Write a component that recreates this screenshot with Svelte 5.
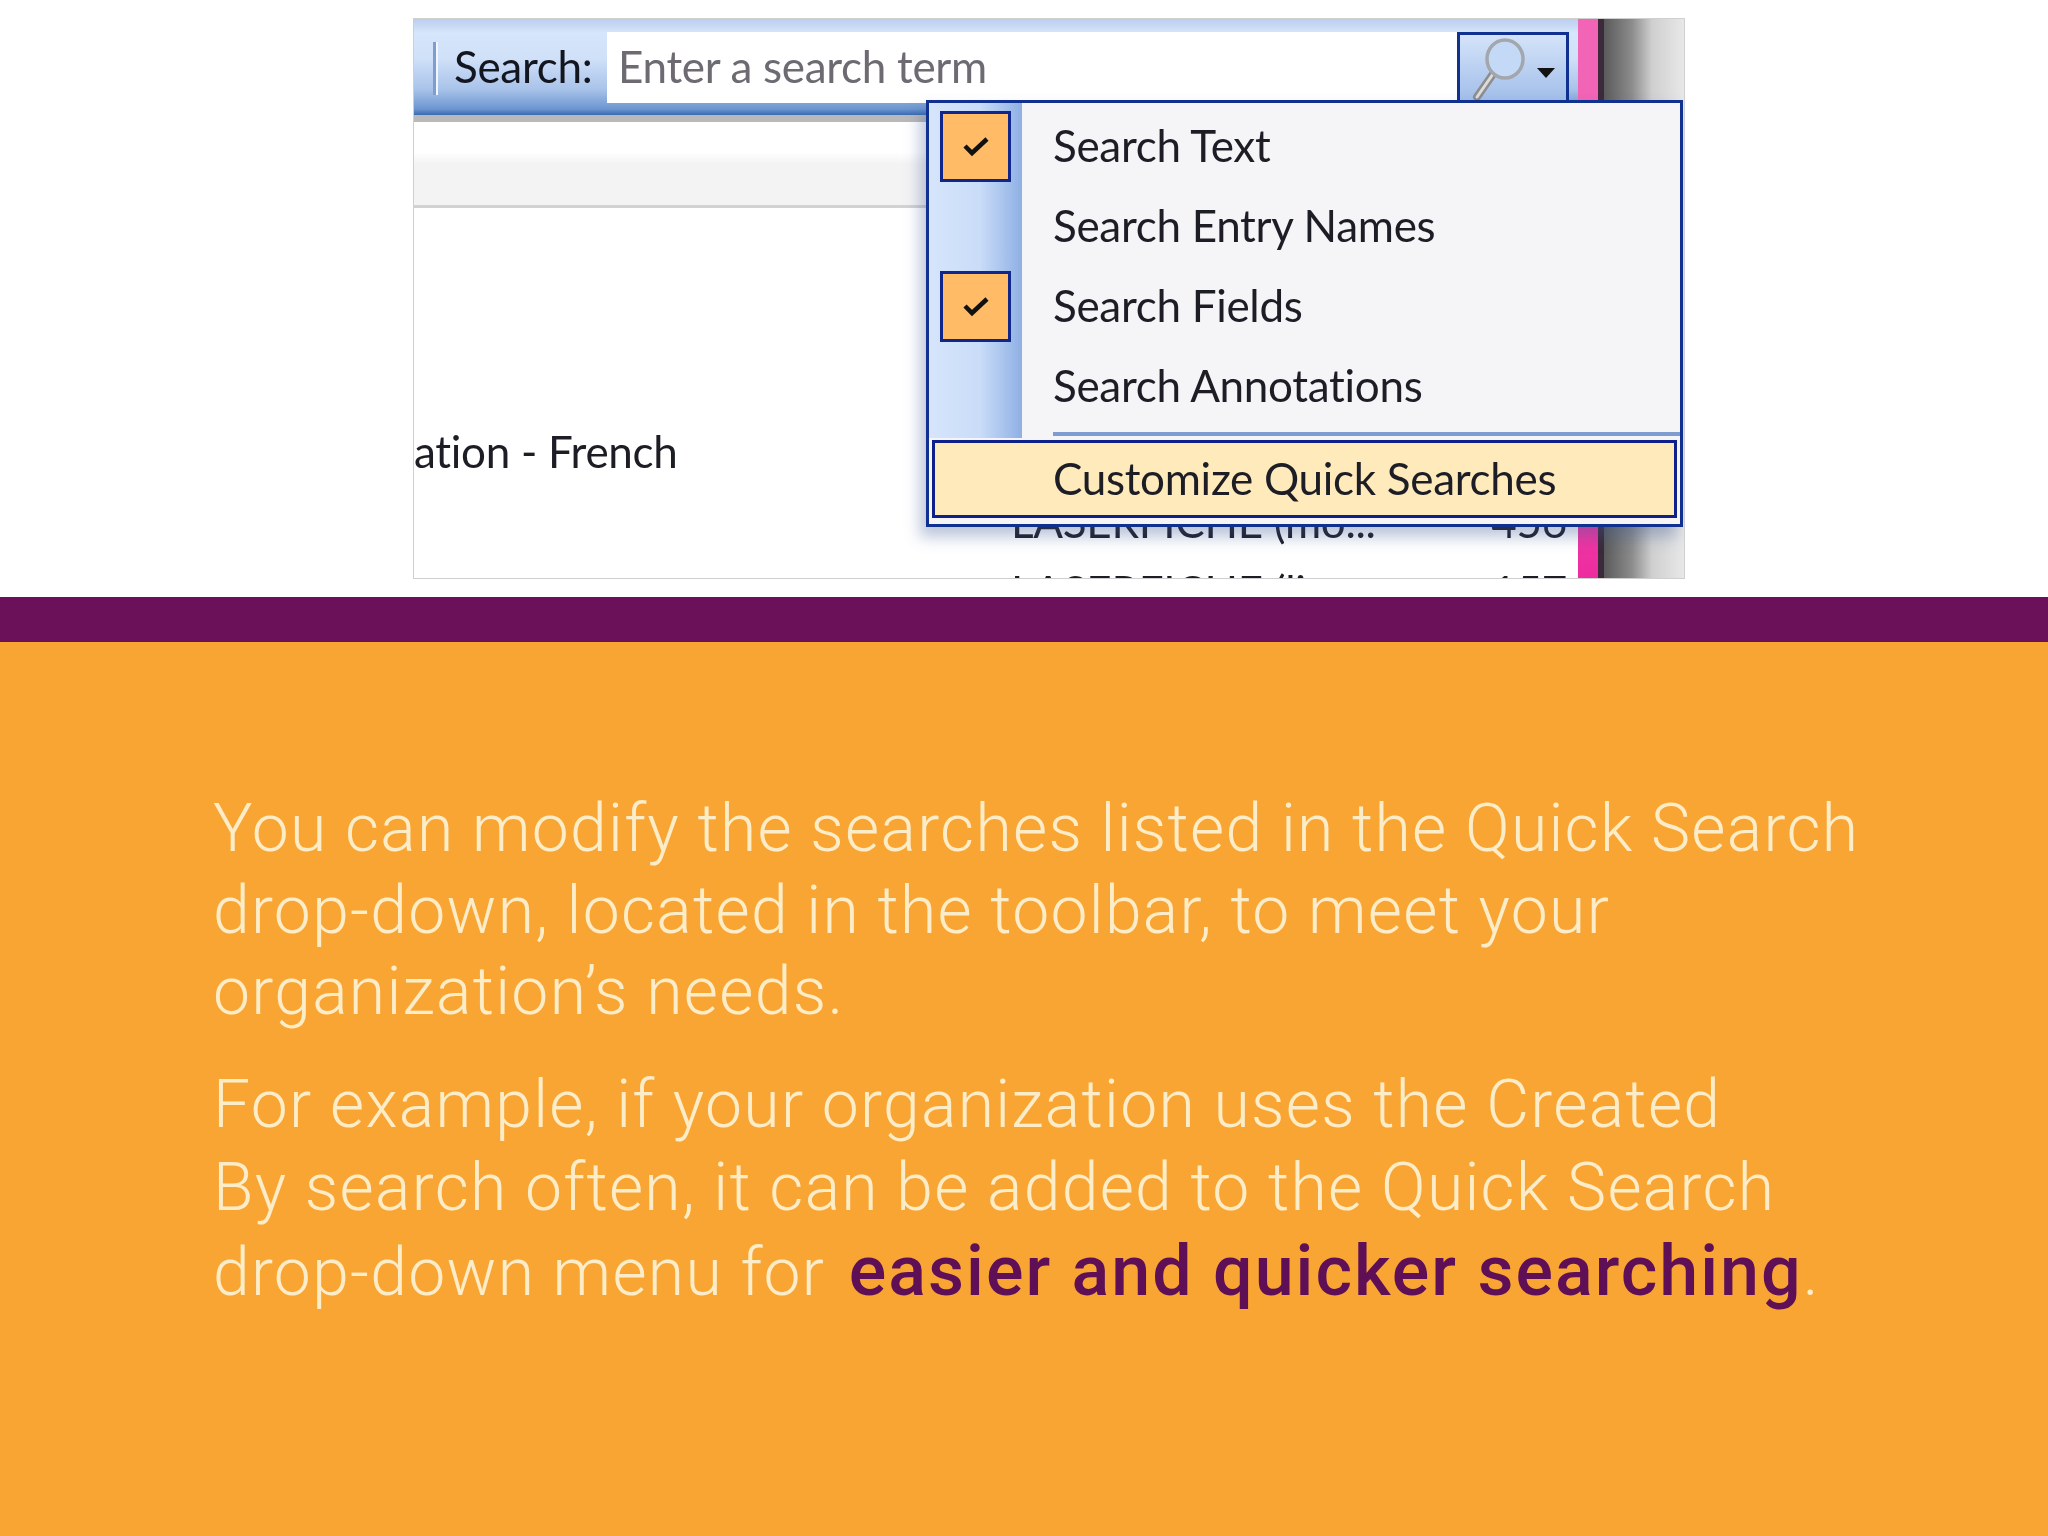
<script>
const menuItems = [
    { label: 'Search Text', checked: true },
    { label: 'Search Entry Names', checked: false },
    { label: 'Search Fields', checked: true },
    { label: 'Search Annotations', checked: false }
];

const rows = [
    { name: 'ation - French', count: '', indent: false },
    { name: 'LASERFICHE (mo...', count: '456', indent: true },
    { name: 'LASERFICHE (li...', count: '157', indent: true }
];
</script>

<div class="page">
    <div class="top">
        <div class="shot">
            <div class="main">
                <div class="toolbar">
                    <span class="sep"></span>
                    <span class="label">Search:</span>
                    <span class="input">Enter a search term</span>
                    <span class="button">
                        <svg class="glass" width="56" height="66" viewBox="0 0 56 66">
                            <line x1="7" y1="60" x2="23" y2="37" stroke="#8d8d8d" stroke-width="8" stroke-linecap="round"/>
                            <line x1="7" y1="60" x2="23" y2="37" stroke="#dcdcdc" stroke-width="3" stroke-linecap="round"/>
                            <ellipse cx="35" cy="22" rx="18" ry="19" fill="#c4d9f6" stroke="#a3a7ad" stroke-width="3.5"/>
                        </svg>
                        <span class="arrow"></span>
                    </span>
                </div>
                <div class="head"></div>
                <div class="list">
                    {#each rows as row}
                        <div class="row" class:indent={row.indent}>
                            <span>{row.name}</span>
                            <span>{row.count}</span>
                        </div>
                    {/each}
                </div>
            </div>
            <div class="strip">
                <span class="pink"></span>
                <span class="dark"></span>
                <span class="fade"></span>
            </div>

            <div class="menu">
                <div class="items">
                    {#each menuItems as item}
                        <div class="item">
                            <span class="check" class:on={item.checked}>
                                {#if item.checked}
                                    <svg width="28" height="22" viewBox="0 0 28 22">
                                        <path d="M3 11 L10 18 L25 4" fill="none" stroke="#111" stroke-width="4.5"/>
                                    </svg>
                                {/if}
                            </span>
                            <span class="text">{item.label}</span>
                        </div>
                    {/each}
                    <div class="rule"></div>
                </div>
                <div class="custom">Customize Quick Searches</div>
            </div>
        </div>
    </div>

    <div class="band"></div>

    <div class="body">
        <p class="one">
            You can modify the searches listed in the Quick Search<br>
            drop-down, located in the toolbar, to meet your<br>
            organization’s needs.
        </p>
        <p class="two">
            For example, if your organization uses the Created<br>
            By search often, it can be added to the Quick Search<br>
            drop-down menu for <strong>easier and quicker searching</strong>.
        </p>
    </div>
</div>

<style>
:global(body) {
    margin: 0;
}

.page {
    width: 2048px;
    height: 1536px;
    display: flex;
    flex-direction: column;
    background: #fff;
}

.top {
    height: 597px;
    box-sizing: border-box;
    padding: 18px 0 0 413px;
}

.shot {
    position: relative;
    width: 1272px;
    height: 561px;
    box-sizing: border-box;
    border: 1px solid #cfcfcf;
    display: flex;
    overflow: hidden;
    background: #fff;
    font-family: Lato, sans-serif;
    font-size: 44px;
    letter-spacing: -0.3px;
    color: #1d1d26;
    filter: blur(0.7px);
}

.main {
    width: 1164px;
    flex: none;
    display: flex;
    flex-direction: column;
}

.toolbar {
    height: 96px;
    flex: none;
    box-sizing: border-box;
    padding-top: 13px;
    display: flex;
    align-items: flex-start;
    background: linear-gradient(#bccdf0 0, #d6e6fb 14px, #cfe0f8 40px, #a9c3ea 70px, #6c96d0 90px, #3a6ab2 96px);
}

.sep {
    width: 5px;
    height: 53px;
    margin: 10px 0 0 19px;
    flex: none;
    background: linear-gradient(90deg, #7f9dd0 50%, #f2f7fe 50%);
}

.label {
    margin-left: 16px;
    width: 153px;
    flex: none;
    line-height: 68px;
    color: #14161f;
}

.input {
    width: 850px;
    height: 71px;
    flex: none;
    box-sizing: border-box;
    padding-left: 11px;
    line-height: 68px;
    background: #fff;
    color: #6e6a72;
}

.button {
    width: 112px;
    height: 72px;
    flex: none;
    box-sizing: border-box;
    border: 3px solid #10318f;
    border-bottom: none;
    display: flex;
    align-items: center;
    gap: 11px;
    padding-left: 10px;
    background: linear-gradient(#d4e3f9, #9fbce8);
}

.arrow {
    width: 0;
    height: 0;
    margin-top: 6px;
    border-left: 9px solid transparent;
    border-right: 9px solid transparent;
    border-top: 10px solid #111;
}

.head {
    height: 93px;
    flex: none;
    box-sizing: border-box;
    border-top: 7px solid #b9b9b9;
    border-bottom: 3px solid #d2d2d2;
    background: linear-gradient(#fff 0, #fff 30px, #f3f3f3 42px, #f3f3f3 100%);
}

.list {
    flex: none;
    padding-top: 208px;
}

.row {
    height: 70px;
    display: flex;
    align-items: center;
    justify-content: space-between;
    padding-right: 11px;
}

.row.indent {
    padding-left: 597px;
}

.strip {
    flex: 1;
    display: flex;
}

.pink {
    width: 20px;
    background: linear-gradient(#f164b6 0, #f164b6 60%, #ee2b9f 100%);
}

.dark {
    width: 6px;
    background: #3c2a3a;
}

.fade {
    flex: 1;
    background: linear-gradient(90deg, #5a5a5a 0, #8c8c8c 35%, #cfcfcf 60%, #e8e8e8 100%);
}

.menu {
    position: absolute;
    left: 512px;
    top: 81px;
    width: 757px;
    height: 427px;
    box-sizing: border-box;
    border: 3px solid #10318f;
    background: #f5f4f6;
    box-shadow: -6px 10px 14px rgba(60, 90, 150, 0.35);
}

.items {
    padding-top: 3px;
    height: 335px;
    box-sizing: border-box;
    background: linear-gradient(90deg, #d6e5fb, #c9dcf8 55%, #8fb0e4) 0 0 / 93px 100% no-repeat;
}

.item {
    height: 80px;
    display: flex;
    align-items: center;
}

.check {
    width: 71px;
    height: 71px;
    box-sizing: border-box;
    margin-left: 11px;
    flex: none;
    display: flex;
    align-items: center;
    justify-content: center;
}

.check.on {
    border: 3px solid #10268a;
    background: #ffbb66;
}

.text {
    margin-left: 42px;
    padding-bottom: 2px;
}

.rule {
    height: 4px;
    margin: 6px 0 0 124px;
    background: #7f9cd0;
}

.custom {
    height: 78px;
    margin: 2px 3px 0;
    box-sizing: border-box;
    border: 3px solid #10208a;
    padding-left: 118px;
    line-height: 70px;
    background: #feeabb;
}

.band {
    height: 45px;
    flex: none;
    background: #6a115a;
}

.body {
    flex: 1;
    box-sizing: border-box;
    padding: 146px 0 0 213px;
    background: #f9a533;
    font-family: Roboto, sans-serif;
    font-weight: 300;
    font-size: 66px;
    letter-spacing: 1.3px;
    color: #fdecc8;
}

p {
    margin: 0;
}

.one {
    line-height: 81.5px;
}

.two {
    margin-top: 30px;
    line-height: 83.5px;
}

strong {
    margin-left: 6px;
    font-weight: 500;
    font-size: 70px;
    letter-spacing: 2px;
    color: #5e0f56;
}
</style>
